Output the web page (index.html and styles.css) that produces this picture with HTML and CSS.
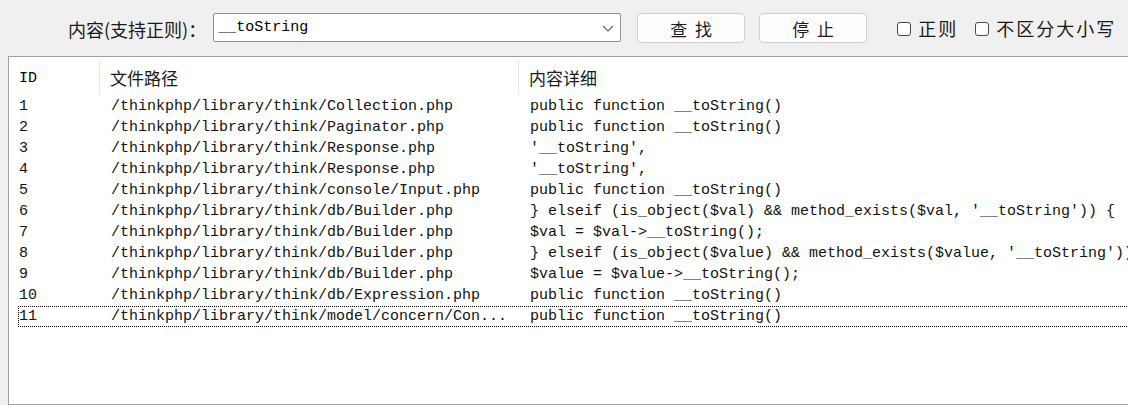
FILE: index.html
```html
<!DOCTYPE html>
<html lang="zh-CN">
<head>
<meta charset="utf-8">
<title>搜索</title>
<link rel="stylesheet" href="styles.css">
</head>
<body>
<div class="window">
  <div class="toolbar">
    <span class="label">内容(支持正则)：</span>
    <div class="combo">
      <span class="combo-text">__toString</span>
      <svg class="chevron" width="12" height="7" viewBox="0 0 12 7"><path d="M1 1 L6 6 L11 1" fill="none" stroke="#606060" stroke-width="1.1"/></svg>
    </div>
    <button class="btn">查 找</button>
    <button class="btn">停 止</button>
    <label class="check"><span class="box"></span>正则</label>
    <label class="check"><span class="box"></span>不区分大小写</label>
  </div>
  <div class="list">
    <div class="header">
      <div class="hcell hid">ID</div>
      <div class="hcell">文件路径</div>
      <div class="hcell last">内容详细</div>
    </div>
    <div class="rows">
      <div class="row"><span class="c1">1</span><span class="c2">/thinkphp/library/think/Collection.php</span><span class="c3">public function __toString()</span></div>
      <div class="row"><span class="c1">2</span><span class="c2">/thinkphp/library/think/Paginator.php</span><span class="c3">public function __toString()</span></div>
      <div class="row"><span class="c1">3</span><span class="c2">/thinkphp/library/think/Response.php</span><span class="c3">'__toString',</span></div>
      <div class="row"><span class="c1">4</span><span class="c2">/thinkphp/library/think/Response.php</span><span class="c3">'__toString',</span></div>
      <div class="row"><span class="c1">5</span><span class="c2">/thinkphp/library/think/console/Input.php</span><span class="c3">public function __toString()</span></div>
      <div class="row"><span class="c1">6</span><span class="c2">/thinkphp/library/think/db/Builder.php</span><span class="c3">} elseif (is_object($val) &amp;&amp; method_exists($val, '__toString')) {</span></div>
      <div class="row"><span class="c1">7</span><span class="c2">/thinkphp/library/think/db/Builder.php</span><span class="c3">$val = $val-&gt;__toString();</span></div>
      <div class="row"><span class="c1">8</span><span class="c2">/thinkphp/library/think/db/Builder.php</span><span class="c3">} elseif (is_object($value) &amp;&amp; method_exists($value, '__toString'))</span></div>
      <div class="row"><span class="c1">9</span><span class="c2">/thinkphp/library/think/db/Builder.php</span><span class="c3">$value = $value-&gt;__toString();</span></div>
      <div class="row"><span class="c1">10</span><span class="c2">/thinkphp/library/think/db/Expression.php</span><span class="c3">public function __toString()</span></div>
      <div class="row selected"><span class="c1">11</span><span class="c2">/thinkphp/library/think/model/concern/Con...</span><span class="c3">public function __toString()</span></div>
    </div>
  </div>
</div>
</body>
</html>
```

FILE: styles.css
```css
html, body {
  margin: 0;
  padding: 0;
  height: 100%;
  overflow: hidden;
  background: #f0f0f0;
}

.window {
  display: flex;
  flex-direction: column;
  height: 100%;
  font-family: "Noto Sans CJK SC", "Noto Sans", sans-serif;
  color: #1a1a1a;
}

.toolbar {
  height: 56px;
  flex: none;
  display: flex;
  align-items: center;
  padding-left: 68px;
  box-sizing: border-box;
}

.label {
  font-size: 18px;
  margin-right: 7px;
  margin-top: 2px;
  white-space: nowrap;
}

.combo {
  width: 408px;
  height: 29px;
  flex: none;
  box-sizing: border-box;
  border: 1px solid #8f8f8f;
  border-radius: 2px;
  background: #fff;
  display: flex;
  align-items: center;
  padding-left: 4px;
  padding-right: 6px;
  margin-top: -1px;
}

.combo-text {
  flex: 1;
  font-family: "Liberation Mono", monospace;
  font-size: 15px;
  color: #000;
}

.chevron {
  display: block;
  margin-top: 1px;
}

.btn {
  width: 108px;
  height: 30px;
  flex: none;
  margin-left: 16px;
  border: 1px solid #d0d0d0;
  border-radius: 4px;
  background: #fdfdfd;
  font-family: "Noto Sans CJK SC", sans-serif;
  font-size: 17px;
  letter-spacing: 2px;
  text-indent: 2px;
  color: #1a1a1a;
  padding: 0;
}

.btn + .btn {
  margin-left: 14px;
}

.check {
  display: flex;
  align-items: center;
  font-size: 18px;
  letter-spacing: 2px;
  margin-left: 30px;
  white-space: nowrap;
}

.check + .check {
  margin-left: 17px;
}

.box {
  width: 14px;
  height: 14px;
  box-sizing: border-box;
  border: 1px solid #4a4a4a;
  border-radius: 3px;
  background: #fff;
  margin-right: 7px;
  margin-top: 1px;
}

.list {
  flex: 1;
  margin-left: 8px;
  width: 1200px;
  border: 1px solid #a0a0a0;
  border-right: none;
  background: #fff;
  overflow: hidden;
}

.header {
  height: 39px;
  display: grid;
  grid-template-columns: 91px 419px 1fr;
  align-items: center;
  padding: 2px 0 2px;
  box-sizing: border-box;
}

.hcell {
  height: 34px;
  display: flex;
  align-items: center;
  padding-left: 10px;
  border-right: 1px solid #e5e5e5;
  font-size: 17px;
  color: #1a1a1a;
}

.hcell.last {
  border-right: none;
}

.hcell.hid {
  font-family: "Liberation Mono", monospace;
  font-size: 15px;
  color: #000;
  padding-top: 2px;
}

.rows {
  padding-left: 9px;
}

.row {
  height: 21px;
  display: grid;
  grid-template-columns: 82px 419px 1fr;
  align-items: center;
  font-family: "Liberation Mono", monospace;
  font-size: 15px;
  color: #111;
  white-space: nowrap;
  border: 1px dotted transparent;
  box-sizing: border-box;
}

.row.selected {
  border-color: #000;
}

.row span {
  overflow: hidden;
}

.c1 {
  padding-left: 0;
}

.c2, .c3 {
  padding-left: 10px;
}
```
